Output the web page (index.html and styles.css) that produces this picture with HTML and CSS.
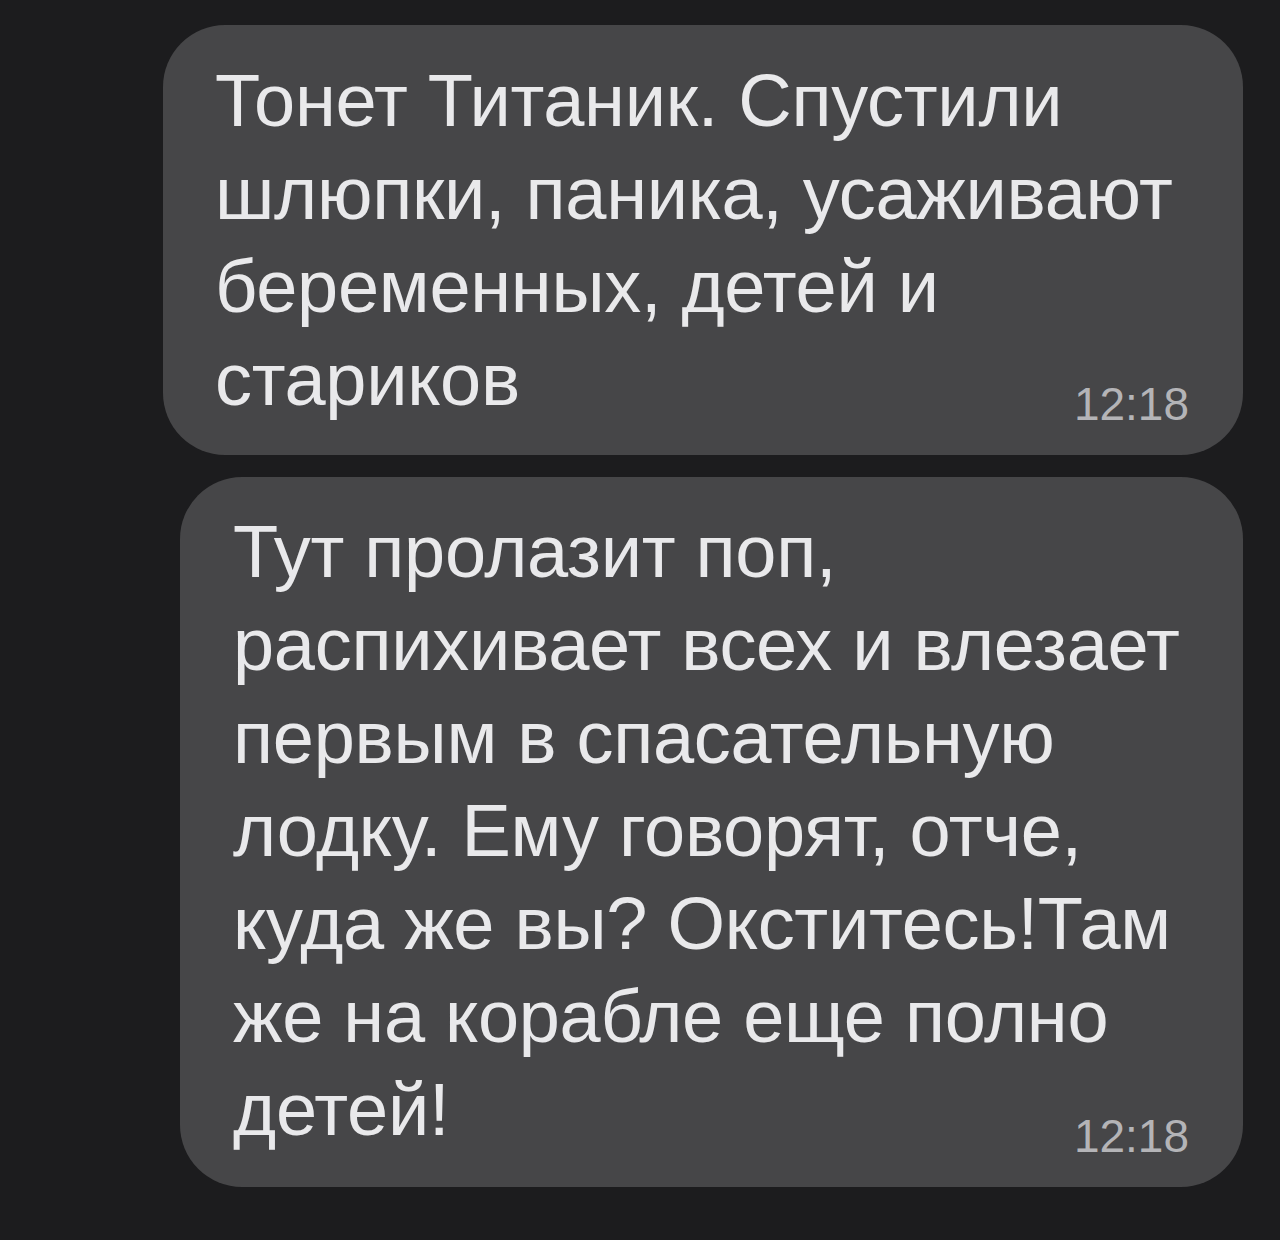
FILE: index.html
```html
<!DOCTYPE html>
<html lang="ru">
<head>
<meta charset="utf-8">
<link rel="stylesheet" href="styles.css">
</head>
<body>
<div class="chat">
  <div class="bubble bubble-1">
    <p class="text">Тонет Титаник. Спустили<br>шлюпки, паника, усаживают<br>беременных, детей и<br>стариков</p>
    <div class="time">12:18</div>
  </div>
  <div class="bubble bubble-2">
    <p class="text">Тут пролазит поп,<br>распихивает всех и влезает<br>первым в спасательную<br>лодку. Ему говорят, отче,<br>куда же вы? Окститесь!Там<br>же на корабле еще полно<br>детей!</p>
    <div class="time">12:18</div>
  </div>
</div>
</body>
</html>
```
FILE: styles.css
```css
html, body {
  margin: 0;
  padding: 0;
  background: #1c1c1e;
}
body {
  width: 1280px;
  height: 1240px;
  overflow: hidden;
  font-family: "Liberation Sans", Arial, sans-serif;
}
.chat {
  display: flex;
  flex-direction: column;
  align-items: flex-end;
  padding: 25px 37px 0 0;
  gap: 22px;
}
.bubble {
  background: #464648;
  border-radius: 62px;
  display: flex;
  flex-direction: column;
  box-sizing: border-box;
}
.bubble-1 {
  width: 1080px;
  padding: 29px 54px 28px 52px;
}
.bubble-2 {
  width: 1063px;
  padding: 28px 54px 28px 53px;
}
.text {
  margin: 0;
  color: #e9e9eb;
  font-size: 74px;
  line-height: 93px;
  letter-spacing: -0.3px;
  white-space: nowrap;
}
.time {
  align-self: flex-end;
  color: #b4b4b7;
  font-size: 46px;
  line-height: 46px;
  margin-top: -45px;
}
.bubble-2 .time {
  margin-top: -43px;
}
```
